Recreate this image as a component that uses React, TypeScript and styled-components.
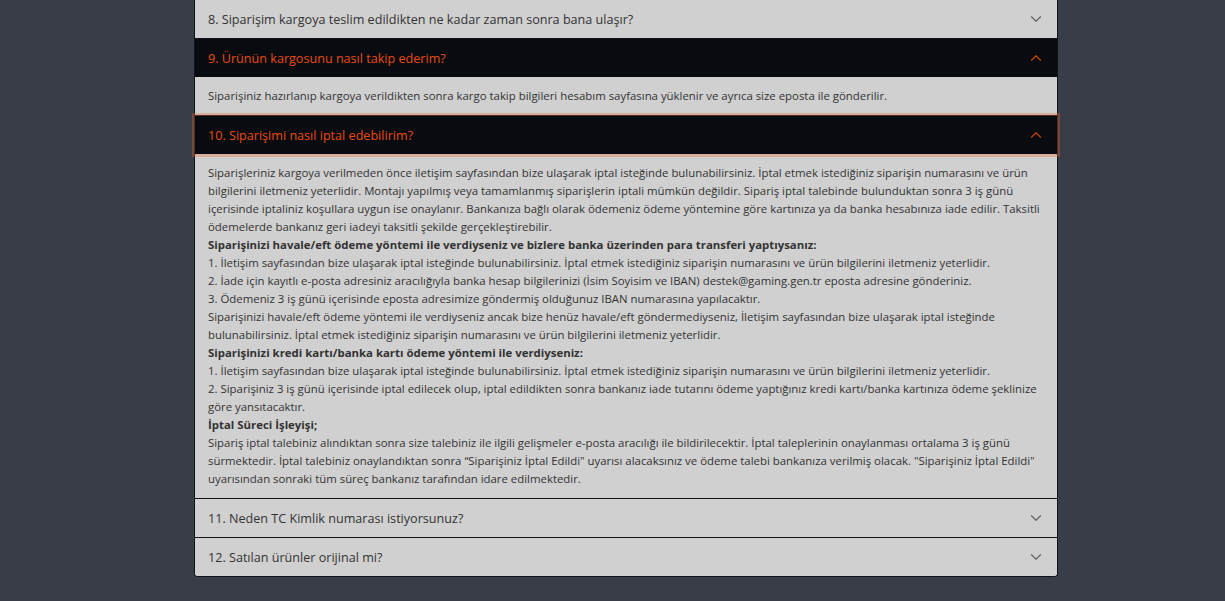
import React from "react";
import styled, { createGlobalStyle } from "styled-components";

const GlobalStyle = createGlobalStyle`
  html, body { margin: 0; padding: 0; background: #393d47; }
  body { font-family: "Open Sans", "Noto Sans", sans-serif; }
  * { box-sizing: border-box; }
`;

const Page = styled.div`
  width: 1225px;
  height: 601px;
  overflow: hidden;
  background: #393d47;
  display: flex;
  align-items: flex-start;
  padding-left: 194px;
`;

const Accordion = styled.div`
  width: 864px;
  border: 1px solid #111318;
  border-top: 0;
  border-radius: 0 0 4px 4px;
  background: #d0d0d0;
`;

const Item = styled.div<{ $first?: boolean }>`
  border-top: 1px solid #111318;
  &:first-child { border-top: 0; }
  &:last-child { border-radius: 0 0 3px 3px; overflow: hidden; }
`;

const Header = styled.button<{ $open?: boolean; $focus?: boolean }>`
  position: relative;
  z-index: ${(p) => (p.$focus ? 3 : 1)};
  display: flex;
  align-items: center;
  width: 100%;
  height: 38px;
  padding: 0 13px;
  border: 0;
  margin: 0;
  text-align: left;
  font-family: inherit;
  font-size: 12.6px;
  color: ${(p) => (p.$open ? "#e84b12" : "#333")};
  background: ${(p) => (p.$open ? "#080b10" : "#d0d0d0")};
  box-shadow: ${(p) => (p.$focus ? "0 0 0 3px rgba(232, 100, 40, 0.32)" : "none")};
`;

const Title = styled.span`
  flex: 1;
`;

const Chevron = styled.svg<{ $open?: boolean }>`
  width: 12px;
  height: 12px;
  margin-right: 2px;
  flex: none;
  transform: ${(p) => (p.$open ? "rotate(180deg)" : "none")};
`;

const Body = styled.div`
  padding: 10px 13px;
  font-size: 11.4px;
  line-height: 18px;
  color: #333;
  background: #d0d0d0;
`;

const Line = styled.div<{ $bold?: boolean }>`
  font-weight: ${(p) => (p.$bold ? 700 : 400)};
`;

const ChevronIcon = ({ open }: { open?: boolean }) => (
  <Chevron $open={open} viewBox="0 0 16 16" fill="none">
    <path
      d="M2 5L8 11L14 5"
      stroke={open ? "#c0440f" : "#666"}
      strokeWidth="1.6"
      strokeLinecap="round"
      strokeLinejoin="round"
    />
  </Chevron>
);

type Faq = {
  q: string;
  open?: boolean;
  focus?: boolean;
  body?: { t: string; b?: boolean }[];
};

const faqs: Faq[] = [
  { q: "8. Siparişim kargoya teslim edildikten ne kadar zaman sonra bana ulaşır?" },
  {
    q: "9. Ürünün kargosunu nasıl takip ederim?",
    open: true,
    body: [
      {
        t: "Siparişiniz hazırlanıp kargoya verildikten sonra kargo takip bilgileri hesabım sayfasına yüklenir ve ayrıca size eposta ile gönderilir.",
      },
    ],
  },
  {
    q: "10. Siparişimi nasıl iptal edebilirim?",
    open: true,
    focus: true,
    body: [
      {
        t: "Siparişleriniz kargoya verilmeden önce iletişim sayfasından bize ulaşarak iptal isteğinde bulunabilirsiniz. İptal etmek istediğiniz siparişin numarasını ve ürün bilgilerini iletmeniz yeterlidir. Montajı yapılmış veya tamamlanmış siparişlerin iptali mümkün değildir. Sipariş iptal talebinde bulunduktan sonra 3 iş günü içerisinde iptaliniz koşullara uygun ise onaylanır. Bankanıza bağlı olarak ödemeniz ödeme yöntemine göre kartınıza ya da banka hesabınıza iade edilir. Taksitli ödemelerde bankanız geri iadeyi taksitli şekilde gerçekleştirebilir.",
      },
      {
        t: "Siparişinizi havale/eft ödeme yöntemi ile verdiyseniz ve bizlere banka üzerinden para transferi yaptıysanız:",
        b: true,
      },
      {
        t: "1. İletişim sayfasından bize ulaşarak iptal isteğinde bulunabilirsiniz. İptal etmek istediğiniz siparişin numarasını ve ürün bilgilerini iletmeniz yeterlidir.",
      },
      {
        t: "2. İade için kayıtlı e-posta adresiniz aracılığıyla banka hesap bilgilerinizi (İsim Soyisim ve IBAN) destek@gaming.gen.tr eposta adresine gönderiniz.",
      },
      {
        t: "3. Ödemeniz 3 iş günü içerisinde eposta adresimize göndermiş olduğunuz IBAN numarasına yapılacaktır.",
      },
      {
        t: "Siparişinizi havale/eft ödeme yöntemi ile verdiyseniz ancak bize henüz havale/eft göndermediyseniz, İletişim sayfasından bize ulaşarak iptal isteğinde bulunabilirsiniz. İptal etmek istediğiniz siparişin numarasını ve ürün bilgilerini iletmeniz yeterlidir.",
      },
      { t: "Siparişinizi kredi kartı/banka kartı ödeme yöntemi ile verdiyseniz:", b: true },
      {
        t: "1. İletişim sayfasından bize ulaşarak iptal isteğinde bulunabilirsiniz. İptal etmek istediğiniz siparişin numarasını ve ürün bilgilerini iletmeniz yeterlidir.",
      },
      {
        t: "2. Siparişiniz 3 iş günü içerisinde iptal edilecek olup, iptal edildikten sonra bankanız iade tutarını ödeme yaptığınız kredi kartı/banka kartınıza ödeme şeklinize göre yansıtacaktır.",
      },
      { t: "İptal Süreci İşleyişi;", b: true },
      {
        t: "Sipariş iptal talebiniz alındıktan sonra size talebiniz ile ilgili gelişmeler e-posta aracılığı ile bildirilecektir. İptal taleplerinin onaylanması ortalama 3 iş günü sürmektedir. İptal talebiniz onaylandıktan sonra “Siparişiniz İptal Edildi\" uyarısı alacaksınız ve ödeme talebi bankanıza verilmiş olacak. \"Siparişiniz İptal Edildi\" uyarısından sonraki tüm süreç bankanız tarafından idare edilmektedir.",
      },
    ],
  },
  { q: "11. Neden TC Kimlik numarası istiyorsunuz?" },
  { q: "12. Satılan ürünler orijinal mi?" },
];

export default function App() {
  return (
    <Page>
      <GlobalStyle />
      <Accordion>
        {faqs.map((f) => (
          <Item key={f.q}>
            <Header $open={f.open} $focus={f.focus} type="button">
              <Title>{f.q}</Title>
              <ChevronIcon open={f.open} />
            </Header>
            {f.body && (
              <Body>
                {f.body.map((l, j) => (
                  <Line key={j} $bold={l.b}>
                    {l.t}
                  </Line>
                ))}
              </Body>
            )}
          </Item>
        ))}
      </Accordion>
    </Page>
  );
}
